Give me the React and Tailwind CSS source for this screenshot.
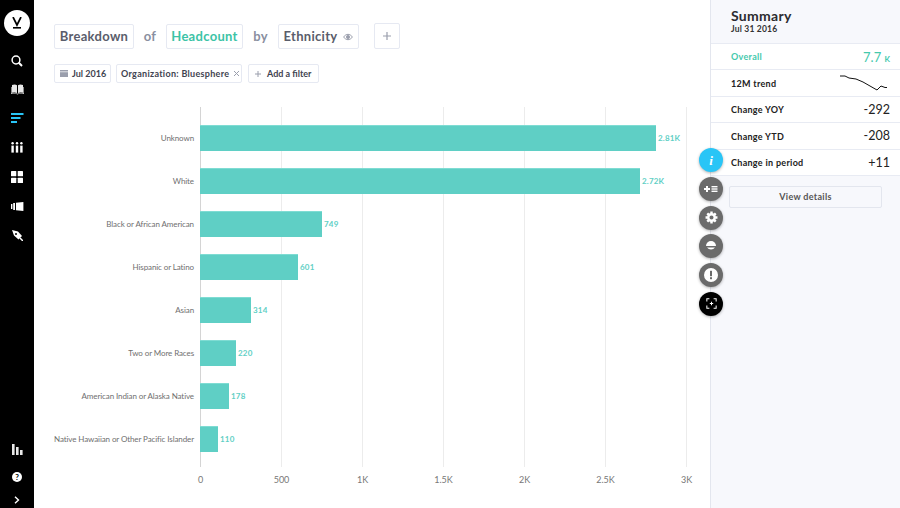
import React from "react";

const rows = [
  ["Unknown", 456, "2.81K"],
  ["White", 440, "2.72K"],
  ["Black or African American", 122, "749"],
  ["Hispanic or Latino", 98, "601"],
  ["Asian", 51, "314"],
  ["Two or More Races", 36, "220"],
  ["American Indian or Alaska Native", 29, "178"],
  ["Native Hawaiian or Other Pacific Islander", 18, "110"],
];
const ticks = ["0", "500", "1K", "1.5K", "2K", "2.5K", "3K"];

const Nav = ({ children, cls = "" }) => (
  <div className={`h-[29.2px] flex items-center justify-center ${cls}`}>{children}</div>
);

function Sidebar() {
  return (
    <aside className="w-[34px] shrink-0 bg-black flex flex-col items-center text-white">
      <div className="mt-[10px] w-[26px] h-[26px] rounded-full bg-white flex items-center justify-center">
        <svg width="10" height="12" viewBox="0 0 10 12"><path d="M1 0 L5 8 L9 0" fill="none" stroke="#000" strokeWidth="1.7"/><rect x="1" y="10" width="8" height="1.6" fill="#000"/></svg>
      </div>
      <div className="mt-[10px] flex flex-col w-full">
        <Nav>
          <svg width="12" height="12" viewBox="0 0 12 12" fill="none" stroke="#fff" strokeWidth="1.5"><circle cx="5" cy="5" r="3.9"/><path d="M7.8 7.8 L11 11" strokeWidth="2"/></svg>
        </Nav>
        <Nav>
          <svg width="13" height="11" viewBox="0 0 13 11" fill="#e8e8e8"><path d="M1 1 Q4 0 6 1.2 V9 Q4 8 1 8.8Z"/><path d="M12 1 Q9 0 7 1.2 V9 Q9 8 12 8.8Z"/><path d="M0 3 V10 Q4 9 6.5 10.5 Q9 9 13 10 V3 H12.4 V9.3 Q9 8.5 6.5 9.8 Q4 8.5 .6 9.3 V3Z"/></svg>
        </Nav>
        <Nav>
          <svg width="13" height="11" viewBox="0 0 13 11" fill="#29c5f6"><rect x="0" y="0" width="12.5" height="2"/><rect x="0" y="4" width="9.5" height="2"/><rect x="0" y="8" width="6" height="2"/></svg>
        </Nav>
        <Nav cls="-mt-[1px] mb-[1px]">
          <svg width="12" height="11" viewBox="0 0 12 11" fill="#fff"><circle cx="1.6" cy="1.2" r="1.2"/><circle cx="6" cy="1.2" r="1.2"/><circle cx="10.4" cy="1.2" r="1.2"/><rect x=".4" y="3.6" width="2.4" height="7"/><rect x="4.8" y="3.6" width="2.4" height="7"/><rect x="9.2" y="3.6" width="2.4" height="7"/></svg>
        </Nav>
        <Nav>
          <svg width="12" height="12" viewBox="0 0 12 12" fill="#fff"><rect width="5.3" height="5.3" rx=".6"/><rect x="6.7" width="5.3" height="5.3" rx=".6"/><rect y="6.7" width="5.3" height="5.3" rx=".6"/><rect x="6.7" y="6.7" width="5.3" height="5.3" rx=".6"/></svg>
        </Nav>
        <Nav>
          <svg width="13" height="9" viewBox="0 0 13 9" fill="#fff"><rect x="0" y="2" width="1.4" height="5"/><rect x="2.2" y="1" width="1.8" height="7"/><path d="M5 .8 L12.4 0 V9 L5 8.2Z"/></svg>
        </Nav>
        <Nav>
          <svg width="11" height="11" viewBox="0 0 11 11" fill="#fff"><path d="M0 0 L6 1.5 L10 6 L6.5 9.5 L2 5.5Z"/><circle cx="4" cy="4" r="1" fill="#000"/><path d="M8 8 L11 11" stroke="#fff" strokeWidth="1.5"/></svg>
        </Nav>
      </div>
      <div className="mt-auto flex flex-col items-center w-full">
        <Nav cls="-mb-[1px]">
          <svg width="11" height="11" viewBox="0 0 11 11" fill="#e8e8e8"><rect x="0" y="0" width="2.6" height="11"/><rect x="4" y="3" width="2.6" height="8"/><rect x="8" y="6" width="2.6" height="5"/></svg>
        </Nav>
        <Nav>
          <div className="w-[10px] h-[10px] rounded-full bg-white text-black text-[8px] font-bold flex items-center justify-center leading-none">?</div>
        </Nav>
        <Nav cls="!h-[16px]">
          <svg width="6" height="8" viewBox="0 0 6 8" fill="none" stroke="#fff" strokeWidth="1.4"><path d="M1 .7 L4.5 4 L1 7.3"/></svg>
        </Nav>
      </div>
    </aside>
  );
}

const Pill = ({ cls = "", children }) => (
  <div className={`h-[25px] border border-[#e6e9f2] rounded-[2px] flex items-center justify-center bg-white text-[13px] font-bold tracking-[0.3px] ${cls}`}>{children}</div>
);
const Chip = ({ cls = "", children }) => (
  <div className={`h-[19px] border border-[#e6e9f2] rounded-[2px] flex items-center whitespace-nowrap bg-white text-[9px] font-bold text-[#3f4350] ${cls}`}>{children}</div>
);

function Header() {
  return (
    <div>
      <div className="flex items-center text-[#5a5d6b]">
        <Pill cls="w-[80px]">Breakdown</Pill>
        <span className="w-[32px] text-center text-[13px] font-bold tracking-[0.3px] text-[#8a8fa0]">of</span>
        <Pill cls="w-[77px] text-[#3cc3a6]">Headcount</Pill>
        <span className="w-[35px] text-center text-[13px] font-bold tracking-[0.3px] text-[#8a8fa0]">by</span>
        <Pill cls="w-[81px] gap-[6px]">
          Ethnicity
          <svg width="10" height="8" viewBox="0 0 10 8" fill="none" stroke="#9a9eac" strokeWidth="1"><path d="M.5 4 Q5 -1.5 9.5 4 Q5 9.5 .5 4Z"/><circle cx="5" cy="4" r="1.5" fill="#9a9eac"/></svg>
        </Pill>
        <div className="ml-[15px] w-[26px] h-[26px] -mt-[1px] border border-[#e6e9f2] rounded-[2px] flex items-center justify-center">
          <svg width="8" height="8" viewBox="0 0 8 8" stroke="#9a9eac" strokeWidth="1.2"><path d="M4 0 V8 M0 4 H8"/></svg>
        </div>
      </div>
      <div className="flex mt-[15px]">
        <Chip cls="w-[57px] pl-[5px] gap-[4px] text-[8.5px]">
          <svg width="8" height="7" viewBox="0 0 8 7" fill="#9a9eac"><rect y="0" width="8" height="1.5"/><rect y="2.2" width="8" height="4.8"/></svg>
          Jul 2016
        </Chip>
        <Chip cls="ml-[5px] w-[126px] pl-[4px] gap-[4px] tracking-[0.3px]">
          Organization: Bluesphere
          <svg width="7" height="7" viewBox="0 0 7 7" stroke="#9a9eac" strokeWidth="1"><path d="M1 1 L6 6 M6 1 L1 6"/></svg>
        </Chip>
        <Chip cls="ml-[6px] w-[71px] pl-[5px] gap-[5px]">
          <svg width="8" height="8" viewBox="0 0 8 8" stroke="#9a9eac" strokeWidth="1"><path d="M4 1 V7 M1 4 H7"/></svg>
          Add a filter
        </Chip>
      </div>
    </div>
  );
}

function Chart() {
  return (
    <div className="mt-[24px]">
      <div className="flex h-[360px]">
        <div className="w-[146px] shrink-0 pt-[9px] text-right pr-[6px] text-[8px] tracking-[-0.1px] text-[#6f6f6f]">
          {rows.map((r) => (
            <div key={r[0]} className="h-[43px] flex items-center justify-end whitespace-nowrap">{r[0]}</div>
          ))}
        </div>
        <div className="relative w-[487px] shrink-0 pt-[9px]">
          <div className="absolute inset-0 flex justify-between">
            {ticks.map((t, i) => (
              <div key={t} className={`w-px h-full ${i === 0 ? "bg-[#d4d4d4]" : "bg-[#ececec]"}`} />
            ))}
          </div>
          <div className="relative">
            {rows.map((r) => (
              <div key={r[0]} className="h-[43px] flex items-center">
                <div className="h-[26px] bg-[#5fcfc5] border-t border-[#7fdcd3]" style={{ width: r[1] }} />
                <span className="ml-[2px] text-[8px] font-bold tracking-[0.2px] text-[#5fcfc5]">{r[2]}</span>
              </div>
            ))}
          </div>
        </div>
      </div>
      <div className="ml-[146px] w-[487px] flex justify-between mt-[6px] text-[9px] text-[#777]">
        {ticks.map((t) => (
          <div key={t} className="w-px flex justify-center whitespace-nowrap">{t}</div>
        ))}
      </div>
    </div>
  );
}

const Row = ({ label, value, cls = "" }) => (
  <div className="h-[26.4px] pl-[20px] pr-[10px] pt-[1px] flex items-center justify-between border-b border-[#e8ebf3] bg-white">
    <span className={`text-[9px] font-bold tracking-[0.3px] ${cls || "text-[#222]"}`}>{label}</span>
    {value}
  </div>
);

function Summary() {
  return (
    <aside className="w-[190px] shrink-0 bg-[#f7f8fc] border-l border-[#e3e6ee] flex flex-col">
      <div className="h-[44px] px-[20px] pt-[7px] border-b border-[#e8ebf3]">
        <div className="text-[14px] leading-[17px] font-bold tracking-[0.3px] text-[#2c2c30]">Summary</div>
        <div className="text-[8.5px] leading-[11px] font-bold tracking-[0.2px] text-[#333]">Jul 31 2016</div>
      </div>
      <Row label="Overall" cls="text-[#45c9ad]" value={
        <span className="text-[#45c9ad] text-[13px] leading-none">7.7 <span className="text-[8px] font-bold">K</span></span>
      } />
      <Row label="12M trend" value={
        <svg width="48" height="17" viewBox="0 0 48 17" fill="none" stroke="#111" strokeWidth="1" className="mr-[3px]">
          <path d="M1 1 H6 L10 3 L17 4 L24 7 L31 11 L38 15 L42 11 L46 12.5 H48" />
        </svg>
      } />
      <Row label="Change YOY" value={<span className="text-[12.5px] text-[#222] leading-none">-292</span>} />
      <Row label="Change YTD" value={<span className="text-[12.5px] text-[#222] leading-none">-208</span>} />
      <Row label="Change in period" value={<span className="text-[12.5px] text-[#222] leading-none">+11</span>} />
      <div className="mt-[10px] mx-[18px] h-[22px] border border-[#e3e6ee] rounded-[2px] flex items-center justify-center text-[9px] font-bold tracking-[0.3px] text-[#555]">View details</div>
    </aside>
  );
}

const Fab = ({ cls = "bg-[#6b6b6b]", children }) => (
  <div className={`w-[24px] h-[24px] rounded-full flex items-center justify-center shadow-[0_1px_3px_rgba(0,0,0,0.3)] ${cls}`}>{children}</div>
);

function Fabs() {
  return (
    <div className="absolute left-[699px] top-[148px] flex flex-col gap-[4.8px]">
      <Fab cls="bg-[#29c5f6]"><span className="text-white text-[13px] font-bold italic leading-none" style={{ fontFamily: '"Liberation Serif", serif' }}>i</span></Fab>
      <Fab>
        <svg width="14" height="8" viewBox="0 0 14 8" fill="#fff"><path d="M2 2.9 H0 V5.1 H2 V7 H4 V5.1 H6 V2.9 H4 V1 H2Z"/><rect x="7.5" y="1" width="6" height="1.4"/><rect x="7.5" y="3.3" width="6" height="1.4"/><rect x="7.5" y="5.6" width="6" height="1.4"/></svg>
      </Fab>
      <Fab>
        <svg width="13" height="13" viewBox="0 0 24 24" fill="none" stroke="#fff" strokeWidth="4.5"><circle cx="12" cy="12" r="6"/><path d="M12 1 V5 M12 19 V23 M1 12 H5 M19 12 H23 M4.2 4.2 L7 7 M17 17 L19.8 19.8 M4.2 19.8 L7 17 M17 7 L19.8 4.2"/></svg>
      </Fab>
      <Fab>
        <svg width="12" height="12" viewBox="0 0 12 12"><path d="M1 6 A5 5 0 0 1 11 6Z" fill="#fff"/><path d="M2 7.6 H10 A5 5 0 0 1 2 7.6Z" fill="#fff"/></svg>
      </Fab>
      <Fab>
        <svg width="14" height="14" viewBox="0 0 14 14"><circle cx="7" cy="7" r="7" fill="#fff"/><rect x="6" y="2.8" width="2" height="5.4" fill="#6b6b6b"/><rect x="6" y="9.2" width="2" height="2" fill="#6b6b6b"/></svg>
      </Fab>
      <Fab cls="bg-black">
        <svg width="11" height="11" viewBox="0 0 13 13" fill="none" stroke="#fff" strokeWidth="1.2"><path d="M1 4 V1 H4 M9 1 H12 V4 M12 9 V12 H9 M4 12 H1 V9"/><path d="M6.5 4.5 V8.5 M4.5 6.5 H8.5"/></svg>
      </Fab>
    </div>
  );
}

export default function App() {
  return (
    <div className="relative w-[900px] h-[508px] flex overflow-hidden bg-white" style={{ fontFamily: 'Lato, sans-serif' }}>
      <Sidebar />
      <main className="w-[676px] shrink-0 pl-[20px] pt-[24px]">
        <Header />
        <Chart />
      </main>
      <Summary />
      <Fabs />
    </div>
  );
}
